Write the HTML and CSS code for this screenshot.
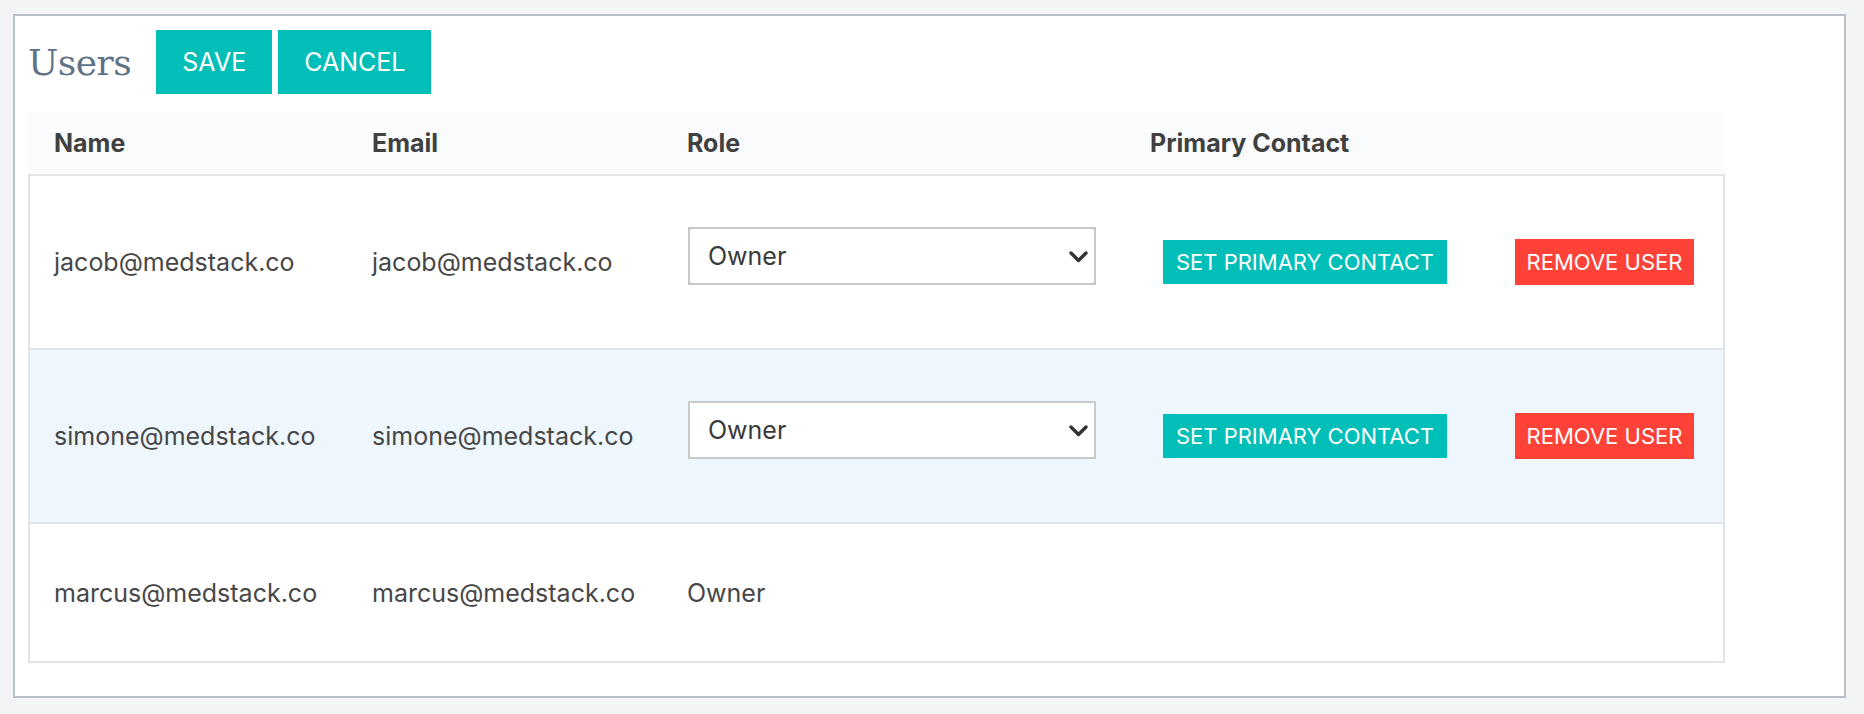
FILE: index.html
```html
<!DOCTYPE html>
<html lang="en">
<head>
<meta charset="utf-8">
<title>Users</title>
<link rel="stylesheet" href="styles.css">
</head>
<body>
<div class="card">
  <div class="toolbar">
    <h1 class="title">Users</h1>
    <button class="btn btn-lg">SAVE</button>
    <button class="btn btn-lg">CANCEL</button>
  </div>
  <div class="table">
    <div class="thead">
      <div class="th">Name</div>
      <div class="th">Email</div>
      <div class="th">Role</div>
      <div class="th">Primary Contact</div>
      <div class="th"></div>
    </div>
    <div class="tbody">
      <div class="row">
        <div class="td first">jacob@medstack.co</div>
        <div class="td">jacob@medstack.co</div>
        <div class="td">
          <div class="select-wrap">
            <select class="select"><option>Owner</option><option>Admin</option><option>Member</option></select>
            <svg class="chev" viewBox="0 0 19 12" width="19" height="12"><path d="M2 2 L9.5 9.5 L17 2" fill="none" stroke="#333" stroke-width="3.4" stroke-linecap="round" stroke-linejoin="round"/></svg>
          </div>
        </div>
        <div class="td center"><button class="btn btn-sm">SET PRIMARY CONTACT</button></div>
        <div class="td center"><button class="btn btn-sm btn-red">REMOVE USER</button></div>
      </div>
      <div class="row hl">
        <div class="td first">simone@medstack.co</div>
        <div class="td">simone@medstack.co</div>
        <div class="td">
          <div class="select-wrap">
            <select class="select"><option>Owner</option><option>Admin</option><option>Member</option></select>
            <svg class="chev" viewBox="0 0 19 12" width="19" height="12"><path d="M2 2 L9.5 9.5 L17 2" fill="none" stroke="#333" stroke-width="3.4" stroke-linecap="round" stroke-linejoin="round"/></svg>
          </div>
        </div>
        <div class="td center"><button class="btn btn-sm">SET PRIMARY CONTACT</button></div>
        <div class="td center"><button class="btn btn-sm btn-red">REMOVE USER</button></div>
      </div>
      <div class="row short">
        <div class="td first">marcus@medstack.co</div>
        <div class="td">marcus@medstack.co</div>
        <div class="td">Owner</div>
        <div class="td"></div>
        <div class="td"></div>
      </div>
    </div>
  </div>
</div>
</body>
</html>
```
FILE: styles.css
```css
html, body {
  margin: 0;
  background: #f3f4f6;
}
body {
  padding: 14px 18px 16px 13px;
  font-family: Inter, "Noto Sans", sans-serif;
  color: #464646;
}
.card {
  background: #fff;
  border: 2px solid #b6c0cb;
  padding: 14px 0 33px 13px;
  height: 684px;
  box-sizing: border-box;
}
.toolbar {
  display: flex;
  align-items: center;
  gap: 6px;
  height: 64px;
}
.title {
  margin: 0 19px 0 0;
  font-family: "DejaVu Serif", serif;
  font-weight: normal;
  font-size: 36px;
  color: #5f7388;
  letter-spacing: -0.5px;
}
.btn {
  border: none;
  background: #00bfb9;
  color: #fff;
  font-family: Inter, "Noto Sans", sans-serif;
  cursor: pointer;
  padding: 0;
}
.btn-lg {
  height: 64px;
  padding: 0 26px;
  font-size: 25px;
}
.btn-sm {
  height: 44px;
  padding: 0 13px;
  font-size: 22px;
}
.btn-red {
  background: #ff4237;
  height: 46px;
  padding: 0 12px;
}
.table {
  width: 1697px;
  margin-top: 18px;
}
.thead {
  display: grid;
  grid-template-columns: 318px 315px 463px 362px 239px;
  height: 62px;
  background: #fafbfd;
  border-bottom: 2px solid #e3e5e8;
  align-items: center;
}
.th {
  padding-left: 26px;
  font-weight: 700;
  font-size: 25px;
  color: #404040;
}
.tbody {
  border-left: 2px solid #e1e3e6;
  border-right: 2px solid #e1e3e6;
}
.row {
  display: grid;
  grid-template-columns: 316px 315px 463px 362px 237px;
  height: 172px;
  align-items: center;
  border-bottom: 2px solid #e0e3e7;
  font-size: 25px;
  color: #474747;
}
.row.hl {
  background: #eef6fe;
}
.row.short {
  height: 137px;
}
.td {
  padding-left: 26px;
}
.td.first {
  padding-left: 24px;
}
.td.center {
  padding-left: 0;
  display: flex;
  justify-content: center;
}
.select-wrap {
  position: relative;
  width: 408px;
  height: 58px;
  margin: 0 0 12px 1px;
}
.select {
  appearance: none;
  -webkit-appearance: none;
  width: 100%;
  height: 100%;
  border: 2px solid #c9c9c9;
  border-radius: 0;
  background: #fff;
  padding: 0 0 0 18px;
  font-family: Inter, "Noto Sans", sans-serif;
  font-size: 25px;
  color: #3a3a3a;
}
.chev {
  position: absolute;
  right: 8px;
  top: 24px;
  pointer-events: none;
}
```
